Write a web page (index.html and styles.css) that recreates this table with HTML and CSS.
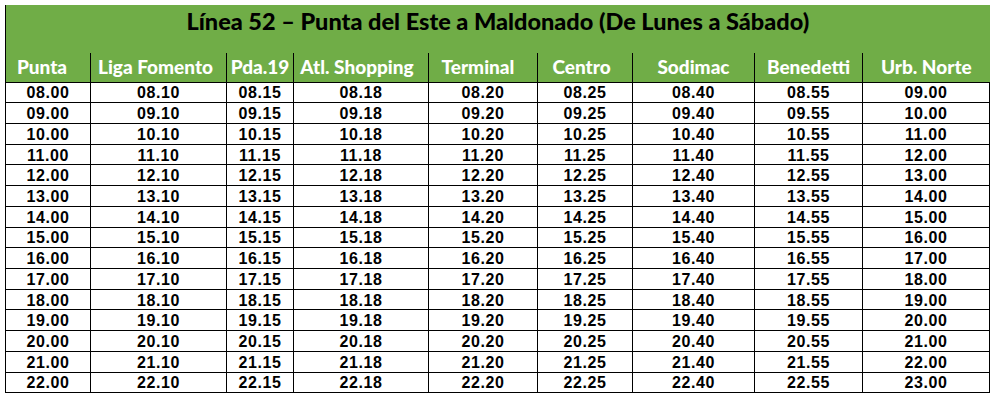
FILE: index.html
```html
<!DOCTYPE html>
<html lang="es">
<head>
<meta charset="utf-8">
<title>Línea 52</title>
<link rel="stylesheet" href="styles.css">
</head>
<body>
<table class="sched">
<colgroup>
<col class="c1"><col class="c2"><col class="c3"><col class="c4"><col class="c5"><col class="c6"><col class="c7"><col class="c8"><col class="c9">
</colgroup>
<thead>
<tr class="title-row"><th colspan="9" class="title">Línea 52 – Punta del Este a Maldonado (De Lunes a Sábado)</th></tr>
<tr class="head-row"><th class="sp12">Punta</th><th class="sp6">Liga Fomento</th><th>Pda.19</th><th class="sp8">Atl. Shopping</th><th class="sp10">Terminal</th><th class="sp7">Centro</th><th>Sodimac</th><th>Benedetti</th><th>Urb. Norte</th></tr>
</thead>
<tbody>
<tr><td>08.00</td><td>08.10</td><td>08.15</td><td>08.18</td><td>08.20</td><td>08.25</td><td>08.40</td><td>08.55</td><td>09.00</td></tr>
<tr><td>09.00</td><td>09.10</td><td>09.15</td><td>09.18</td><td>09.20</td><td>09.25</td><td>09.40</td><td>09.55</td><td>10.00</td></tr>
<tr><td>10.00</td><td>10.10</td><td>10.15</td><td>10.18</td><td>10.20</td><td>10.25</td><td>10.40</td><td>10.55</td><td>11.00</td></tr>
<tr><td>11.00</td><td>11.10</td><td>11.15</td><td>11.18</td><td>11.20</td><td>11.25</td><td>11.40</td><td>11.55</td><td>12.00</td></tr>
<tr><td>12.00</td><td>12.10</td><td>12.15</td><td>12.18</td><td>12.20</td><td>12.25</td><td>12.40</td><td>12.55</td><td>13.00</td></tr>
<tr><td>13.00</td><td>13.10</td><td>13.15</td><td>13.18</td><td>13.20</td><td>13.25</td><td>13.40</td><td>13.55</td><td>14.00</td></tr>
<tr><td>14.00</td><td>14.10</td><td>14.15</td><td>14.18</td><td>14.20</td><td>14.25</td><td>14.40</td><td>14.55</td><td>15.00</td></tr>
<tr><td>15.00</td><td>15.10</td><td>15.15</td><td>15.18</td><td>15.20</td><td>15.25</td><td>15.40</td><td>15.55</td><td>16.00</td></tr>
<tr><td>16.00</td><td>16.10</td><td>16.15</td><td>16.18</td><td>16.20</td><td>16.25</td><td>16.40</td><td>16.55</td><td>17.00</td></tr>
<tr><td>17.00</td><td>17.10</td><td>17.15</td><td>17.18</td><td>17.20</td><td>17.25</td><td>17.40</td><td>17.55</td><td>18.00</td></tr>
<tr><td>18.00</td><td>18.10</td><td>18.15</td><td>18.18</td><td>18.20</td><td>18.25</td><td>18.40</td><td>18.55</td><td>19.00</td></tr>
<tr><td>19.00</td><td>19.10</td><td>19.15</td><td>19.18</td><td>19.20</td><td>19.25</td><td>19.40</td><td>19.55</td><td>20.00</td></tr>
<tr><td>20.00</td><td>20.10</td><td>20.15</td><td>20.18</td><td>20.20</td><td>20.25</td><td>20.40</td><td>20.55</td><td>21.00</td></tr>
<tr><td>21.00</td><td>21.10</td><td>21.15</td><td>21.18</td><td>21.20</td><td>21.25</td><td>21.40</td><td>21.55</td><td>22.00</td></tr>
<tr><td>22.00</td><td>22.10</td><td>22.15</td><td>22.18</td><td>22.20</td><td>22.25</td><td>22.40</td><td>22.55</td><td>23.00</td></tr>
</tbody>
</table>
</body>
</html>
```
FILE: styles.css
```css
html, body {
  margin: 0;
  padding: 0;
  background: #ffffff;
}

.sched {
  margin: 5px 0 0 5px;
  border-collapse: collapse;
  table-layout: fixed;
  width: 984px;
}

.c1 { width: 85px; }
.c2 { width: 136px; }
.c3 { width: 67px; }
.c4 { width: 135px; }
.c5 { width: 109px; }
.c6 { width: 95px; }
.c7 { width: 122px; }
.c8 { width: 108px; }
.c9 { width: 127px; }

.title-row {
  height: 48px;
}

.title {
  background: #70ad47;
  color: #000000;
  font-family: Lato, "Liberation Sans", sans-serif;
  font-weight: 900;
  font-size: 23.5px;
  text-align: center;
  vertical-align: top;
  padding: 3px 0 0 0;
  border-left: 1px solid #000;
  line-height: 26px;
}

.head-row {
  height: 29px;
}

.head-row th {
  background: #70ad47;
  color: #ffffff;
  font-family: Lato, "Liberation Sans", sans-serif;
  font-weight: 900;
  font-size: 19px;
  text-align: center;
  padding: 0;
  white-space: nowrap;
  border-left: 1px solid #000;
  line-height: 20px;
}

.head-row th.sp12 { padding-right: 12px; }
.head-row th.sp10 { padding-right: 10px; }
.head-row th.sp8 { padding-right: 8px; }
.head-row th.sp7 { padding-right: 7px; }
.head-row th.sp6 { padding-right: 6px; }

tbody tr {
  height: 20.73px;
}

tbody td {
  font-family: "Liberation Sans", Arial, sans-serif;
  font-weight: 700;
  font-size: 16px;
  letter-spacing: 0.6px;
  text-align: center;
  color: #000;
  padding: 1px 0 0 0;
  border: 1px solid #000;
  line-height: 17px;
}
```
